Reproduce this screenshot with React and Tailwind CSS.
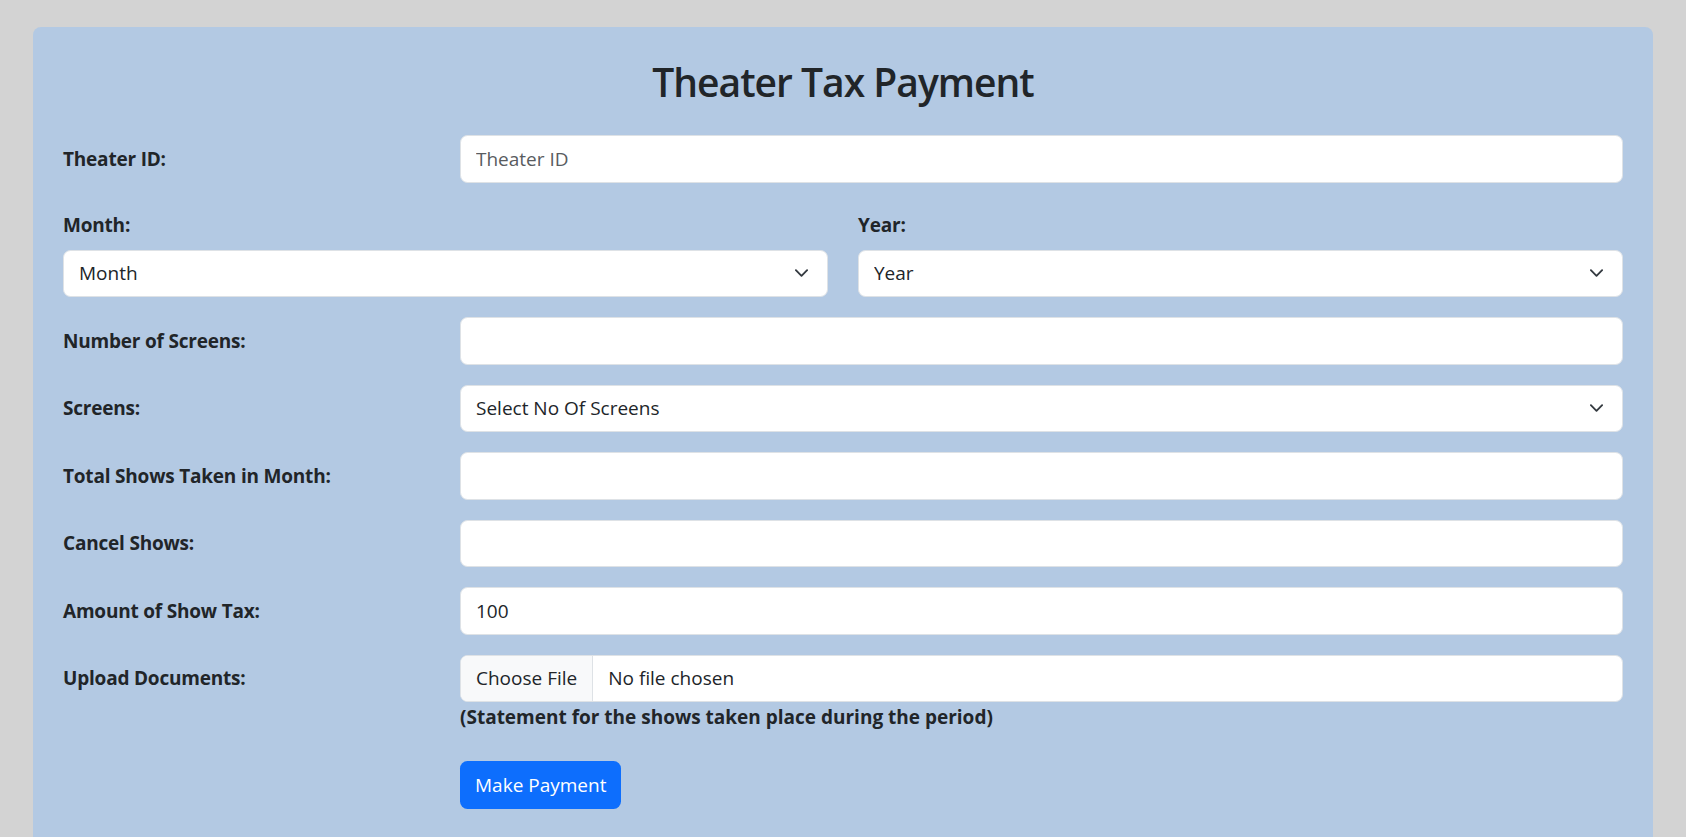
import React from 'react';

const labelCls = 'text-[19px] font-bold leading-[30px] tracking-[-0.2px] text-[#212529]';
const inputCls =
  'w-full h-[47.5px] rounded-[7.5px] border border-[#dee2e6] bg-white px-[15px] text-[19px] text-[#212529] outline-none placeholder:text-[#595c5f]';

function Chevron() {
  return (
    <svg
      className="pointer-events-none absolute right-[19px] top-1/2 -translate-y-1/2"
      width="15"
      height="15"
      viewBox="0 0 16 16"
      fill="none"
      stroke="#343a40"
      strokeWidth="2"
      strokeLinecap="round"
      strokeLinejoin="round"
    >
      <path d="m2 5 6 6 6-6" />
    </svg>
  );
}

function Select({ placeholder }) {
  return (
    <div className="relative">
      <select className={inputCls + ' appearance-none pr-[50px]'} defaultValue="">
        <option value="">{placeholder}</option>
      </select>
      <Chevron />
    </div>
  );
}

function Row({ label, children, className = 'mb-[20px]' }) {
  return (
    <div className={'grid grid-cols-[367px_1fr] gap-x-[30px] items-center ' + className}>
      <label className={labelCls}>{label}</label>
      <div>{children}</div>
    </div>
  );
}

export default function App() {
  return (
    <div
      className="min-h-screen bg-[#d3d3d3] pt-[27px] pl-[33px] pr-[33px]"
      style={{ fontFamily: '"Open Sans", "Noto Sans", sans-serif' }}
    >
      <div className="rounded-[8px] bg-[#b3c9e3] px-[30px] pt-[31px] pb-[40px]">
        <h2 className="mb-[29px] text-center text-[39px] font-semibold leading-[48px] tracking-[-1px] text-[#212529]">
          Theater Tax Payment
        </h2>

        <Row label="Theater ID:" className="mb-[27px]">
          <input className={inputCls} placeholder="Theater ID" />
        </Row>

        <div className="mb-[20px] grid grid-cols-2 gap-x-[30px]">
          <div>
            <label className={labelCls + ' mb-[10px] block'}>Month:</label>
            <Select placeholder="Month" />
          </div>
          <div>
            <label className={labelCls + ' mb-[10px] block'}>Year:</label>
            <Select placeholder="Year" />
          </div>
        </div>

        <Row label="Number of Screens:">
          <input className={inputCls} />
        </Row>

        <Row label="Screens:">
          <Select placeholder="Select No Of Screens" />
        </Row>

        <Row label="Total Shows Taken in Month:">
          <input className={inputCls} />
        </Row>

        <Row label="Cancel Shows:">
          <input className={inputCls} />
        </Row>

        <Row label="Amount of Show Tax:">
          <input className={inputCls} defaultValue="100" />
        </Row>

        <div className="grid grid-cols-[367px_1fr] gap-x-[30px]">
          <label className={labelCls + ' pt-[8.5px]'}>Upload Documents:</label>
          <div>
            <div className="flex h-[47.5px] w-full items-center overflow-hidden rounded-[7.5px] border border-[#dee2e6] bg-white text-[19px] text-[#212529]">
              <span className="flex h-full items-center border-r border-[#dee2e6] bg-[#f8f9fa] px-[15px]">
                Choose File
              </span>
              <span className="pl-[15px]">No file chosen</span>
            </div>
            <p className="text-[19px] font-bold leading-[30px] text-[#212529]">
              (Statement for the shows taken place during the period)
            </p>
            <button className="mt-[29px] h-[47.5px] rounded-[7.5px] bg-[#0d6efd] px-[15px] text-[19px] text-white">
              Make Payment
            </button>
          </div>
        </div>
      </div>
    </div>
  );
}
